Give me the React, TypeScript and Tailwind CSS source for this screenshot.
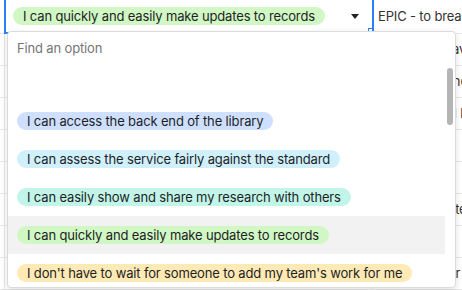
import React from "react";

const rowsRight = [
  "",
  "As a user I have view",
  "As a researcher I hhave",
  "Library user I lc",
  "",
  "",
  "As a service team I -",
  "",
  "As a designer I am mm",
];

const options = [
  { label: "I can access the back end of the library", bg: "bg-[#cfdfff]" },
  { label: "I can assess the service fairly against the standard", bg: "bg-[#d0f0fd]" },
  { label: "I can easily show and share my research with others", bg: "bg-[#c2f5e9]" },
  { label: "I can quickly and easily make updates to records", bg: "bg-[#d1f7c4]", active: true },
  { label: "I don't have to wait for someone to add my team's work for me", bg: "bg-[#ffeab6]" },
];

export default function App() {
  return (
    <div
      className="relative w-[462px] h-[290px] overflow-hidden bg-white text-[13px] tracking-[-0.15px] text-[#1d1f25]"
      style={{ fontFamily: "Inter, 'Liberation Sans', sans-serif" }}
    >
      {/* background grid */}
      <div className="flex flex-col">
        {rowsRight.map((t, i) => (
          <div
            key={i}
            className={`flex border-b border-[#e6e6e6] ${i === 0 ? "h-[34px]" : "h-[32px]"}`}
          >
            <div className="w-[5px] border-r border-[#e6e6e6]" />
            <div className="w-[368px] border-r border-[#e6e6e6]" />
            <div className="flex-1 flex items-center pl-[5px] whitespace-nowrap overflow-hidden text-[#333]">
              {i === 0 ? "EPIC - to break down" : t}
            </div>
          </div>
        ))}
      </div>

      {/* selected cell */}
      <div className="absolute left-[4px] top-[-2px] w-[370px] h-[36px] border-2 border-[#2d7ff9] bg-white flex items-center pl-[7px] pr-[12px]">
        <span className="rounded-full bg-[#d1f7c4] h-[18px] px-[10px] flex items-center whitespace-nowrap leading-none">
          I can quickly and easily make updates to records
        </span>
        <div className="flex-1" />
        <svg width="8" height="5" viewBox="0 0 8 5" className="mr-[1px]">
          <path d="M0 0 L8 0 L4 5 Z" fill="#222" />
        </svg>
      </div>
      <div className="absolute left-[368px] top-[28px] w-[5px] h-[5px] bg-white border border-[#2d7ff9]" />

      {/* dropdown */}
      <div className="absolute left-[7px] top-[31px] w-[449px] h-[257px] bg-white border border-[#dcdcdc] rounded-[4px] shadow-[0_2px_6px_rgba(0,0,0,0.12)] flex flex-col overflow-hidden">
        <div className="h-[32px] shrink-0 flex items-center pl-[9px] pt-[1px] text-[#757575]">Find an option</div>
        <div className="flex flex-1 min-h-0">
          <div className="flex-1 flex flex-col pt-[38px]">
            {options.map((o) => (
              <div
                key={o.label}
                className={`h-[38px] shrink-0 flex items-center pl-[9px] ${o.active ? "bg-[#f2f2f2]" : ""}`}
              >
                <span className={`rounded-full ${o.bg} h-[18px] px-[10px] flex items-center whitespace-nowrap leading-none`}>
                  {o.label}
                </span>
              </div>
            ))}
          </div>
          <div className="w-[10px] shrink-0 flex justify-center">
            <div className="mt-[4px] w-[6px] h-[57px] rounded-full bg-[#b5b5b5]" />
          </div>
        </div>
      </div>
    </div>
  );
}
